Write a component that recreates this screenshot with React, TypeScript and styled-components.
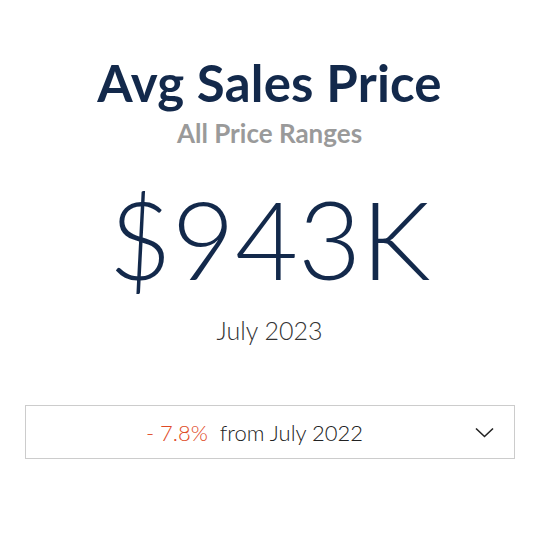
import React from "react";
import styled, { createGlobalStyle } from "styled-components";

const Global = createGlobalStyle`
  html, body { margin: 0; padding: 0; background: #ffffff; }
  body { font-family: Lato, "Noto Sans", sans-serif; }
`;

const Page = styled.div`
  width: 539px;
  height: 534px;
  display: flex;
  flex-direction: column;
  align-items: center;
  box-sizing: border-box;
  padding-top: 53px;
`;

const Title = styled.h1`
  margin: 0;
  font-size: 51px;
  line-height: 60px;
  font-weight: 700;
  color: #13294b;
  letter-spacing: 0.2px;
`;

const Subtitle = styled.div`
  margin-top: 5px;
  font-size: 26px;
  line-height: 30px;
  font-weight: 700;
  color: #9a9a9a;
`;

const BigValue = styled.div`
  margin-top: 35px;
  font-size: 109px;
  line-height: 110px;
  font-weight: 300;
  color: #13294b;
`;

const Period = styled.div`
  margin-top: 22px;
  font-size: 25px;
  line-height: 30px;
  font-weight: 300;
  color: #333333;
`;

const ChangeBox = styled.button`
  margin-top: 60px;
  width: 490px;
  height: 54px;
  box-sizing: border-box;
  border: 1px solid #cccccc;
  background: #ffffff;
  display: flex;
  align-items: center;
  padding: 0 20px 0 0;
  font-family: inherit;
  cursor: pointer;
`;

const ChangeText = styled.div`
  flex: 1;
  display: flex;
  justify-content: center;
  gap: 12px;
  padding-left: 9px;
  font-size: 22px;
  font-weight: 300;
  color: #222222;
`;

const Delta = styled.span<{ $negative: boolean }>`
  color: ${(p) => (p.$negative ? "#e04a26" : "#2e8b57")};
`;

const Chevron = () => (
  <svg width="19" height="11" viewBox="0 0 19 11" fill="none">
    <path d="M1 1.5 L9.5 9.5 L18 1.5" stroke="#222" strokeWidth="1.6" />
  </svg>
);

export default function App() {
  return (
    <>
      <Global />
      <Page>
        <Title>Avg Sales Price</Title>
        <Subtitle>All Price Ranges</Subtitle>
        <BigValue>$943K</BigValue>
        <Period>July 2023</Period>
        <ChangeBox>
          <ChangeText>
            <Delta $negative>- 7.8%</Delta>
            <span>from July 2022</span>
          </ChangeText>
          <Chevron />
        </ChangeBox>
      </Page>
    </>
  );
}
